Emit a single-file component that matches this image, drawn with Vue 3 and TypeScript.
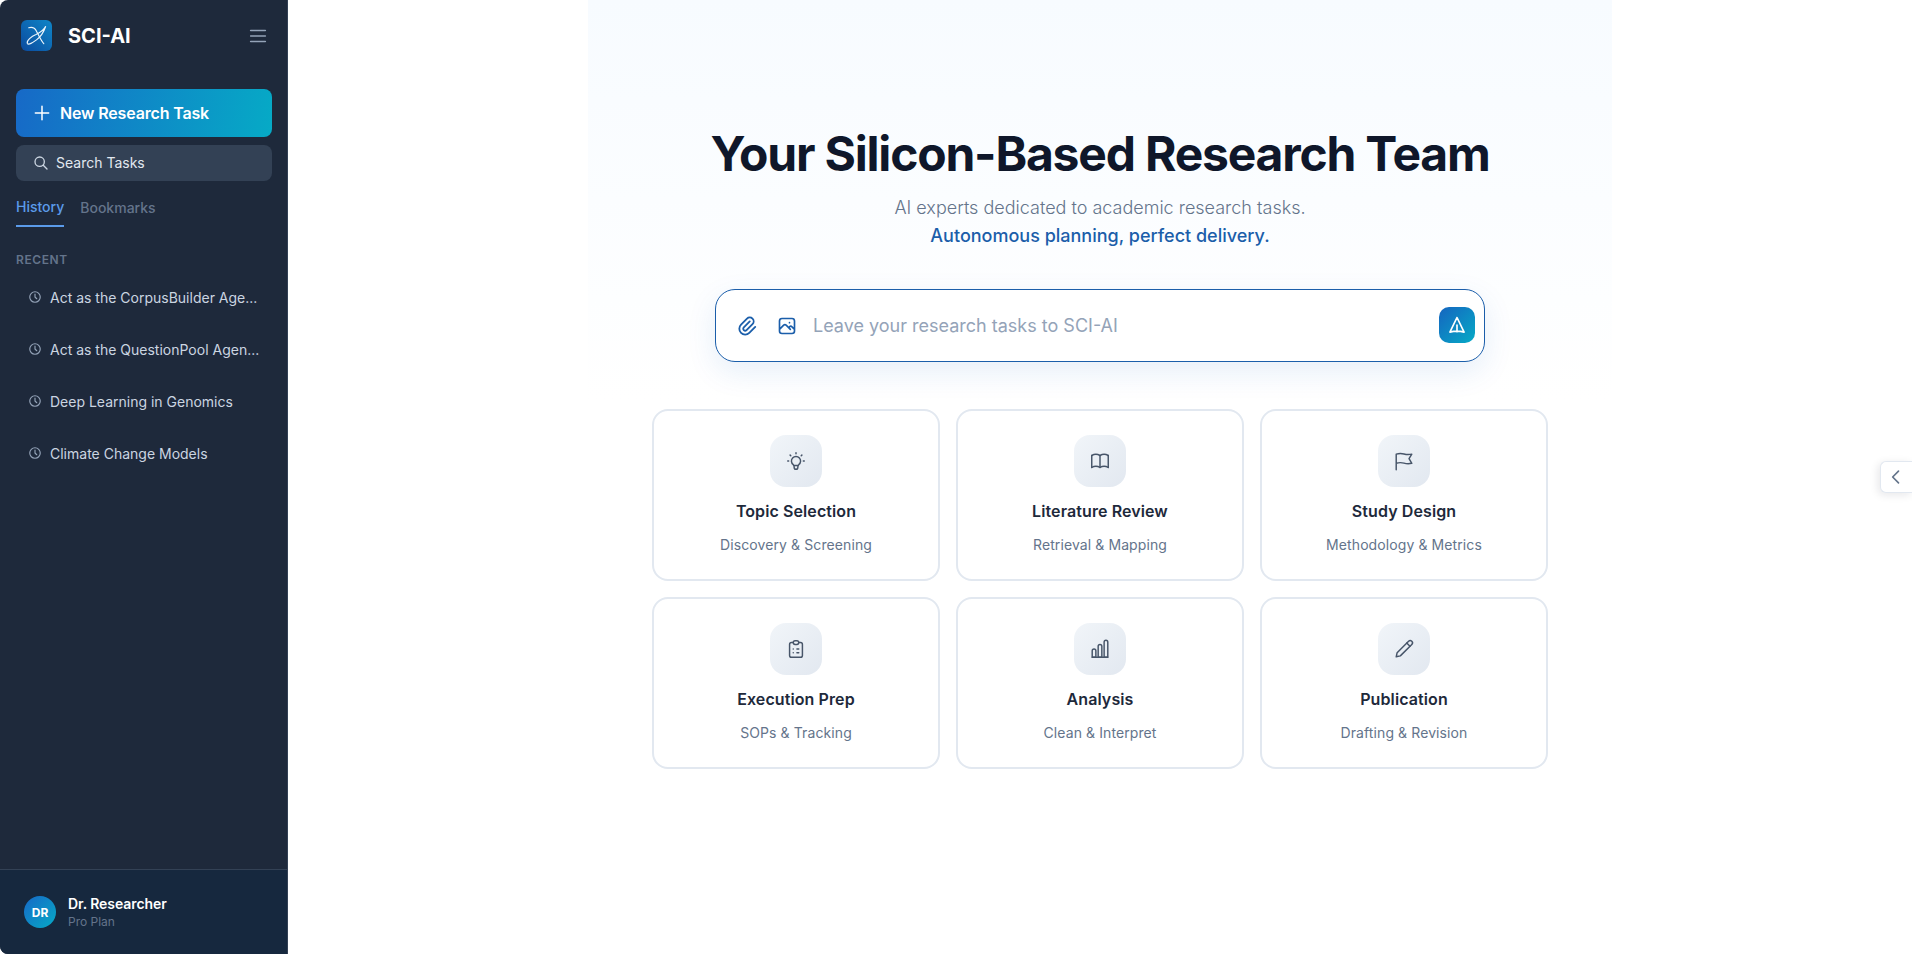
<script setup lang="ts">
const recent: string[] = [
  'Act as the CorpusBuilder Age...',
  'Act as the QuestionPool Agen...',
  'Deep Learning in Genomics',
  'Climate Change Models',
];

const stages = [
  {
    title: 'Topic Selection',
    sub: 'Discovery & Screening',
    paths: [
      'M3 12h1m8 -9v1m8 8h1m-15.4 -6.4l.7 .7m12.1 -.7l-.7 .7',
      'M9 16a5 5 0 1 1 6 0a3.5 3.5 0 0 0 -1 3a2 2 0 0 1 -4 0a3.5 3.5 0 0 0 -1 -3',
      'M9.7 17l4.6 0',
    ],
  },
  {
    title: 'Literature Review',
    sub: 'Retrieval & Mapping',
    paths: [
      'M3 19a9 9 0 0 1 9 0a9 9 0 0 1 9 0',
      'M3 6a9 9 0 0 1 9 0a9 9 0 0 1 9 0',
      'M3 6l0 13',
      'M12 6l0 13',
      'M21 6l0 13',
    ],
  },
  {
    title: 'Study Design',
    sub: 'Methodology & Metrics',
    paths: ['M3.500 21.500V4.500c3-1 5.500-1 8.500-.2s5.500 .8 8.500 .2l-3 5 3 5c-3 .6-5.500 .6-8.500-.2s-5.500-.8-8.500 .2'],
  },
  {
    title: 'Execution Prep',
    sub: 'SOPs & Tracking',
    paths: [
      'M9 5h-2a2 2 0 0 0 -2 2v12a2 2 0 0 0 2 2h10a2 2 0 0 0 2 -2v-12a2 2 0 0 0 -2 -2h-2',
      'M9 5a2 2 0 0 1 2 -2h2a2 2 0 0 1 2 2v0a2 2 0 0 1 -2 2h-2a2 2 0 0 1 -2 -2z',
      'M9 12l.01 0',
      'M13 12l2 0',
      'M9 16l.01 0',
      'M13 16l2 0',
    ],
  },
  {
    title: 'Analysis',
    sub: 'Clean & Interpret',
    paths: [
      'M3.500 14a2 2 0 0 1 4 0v7h-4z',
      'M10 9a2 2 0 0 1 4 0v12h-4z',
      'M16.500 4.500a2 2 0 0 1 4 0v16.500h-4z',
      'M3.500 21h17',
    ],
  },
  {
    title: 'Publication',
    sub: 'Drafting & Revision',
    paths: [
      'M3.500 20.500l1-4.500L17 3.500a2.100 2.100 0 0 1 3.500 3.500L8 19.500z',
      'M15 5.500l3.500 3.500',
    ],
  },
];
</script>

<template>
  <div class="app">
    <aside class="sidebar">
      <div class="brand">
        <span class="logo">
          <svg viewBox="0 0 32 32" width="31" height="31" fill="none" stroke="#eaf4fb" stroke-width="1.200" stroke-linecap="round">
            <path d="M8 8c3.500-1 6-.5 8 3.500s4.500 9.500 7.500 13" />
            <path d="M25.500 6.500c-1.500 4.500-4 10-9.500 14-3.500 2.500-8.500 6-9.500 3.500-.8-2.500 4-7 9-9 4-1.800 8-4.500 10-8.500z" />
          </svg>
        </span>
        <span class="brand-name">SCI-AI</span>
        <svg class="menu" viewBox="0 0 24 24" width="22" height="22" fill="none" stroke="#94a3b8" stroke-width="1.800" stroke-linecap="round">
          <path d="M4 6h16M4 12h16M4 18h16" />
        </svg>
      </div>

      <button class="new-task">
        <svg viewBox="0 0 24 24" width="20" height="20" fill="none" stroke="#fff" stroke-width="1.800" stroke-linecap="round">
          <path d="M12 4v16M4 12h16" />
        </svg>
        New Research Task
      </button>

      <div class="search">
        <svg viewBox="0 0 24 24" width="16" height="16" fill="none" stroke="#cbd5e1" stroke-width="2" stroke-linecap="round">
          <path d="M10 3a7 7 0 1 0 0 14a7 7 0 1 0 0-14zM21 21l-6-6" />
        </svg>
        <span>Search Tasks</span>
      </div>

      <div class="tabs">
        <span class="tab active">History</span>
        <span class="tab">Bookmarks</span>
      </div>

      <div class="section-label">RECENT</div>
      <ul class="history">
        <li v-for="item in recent" :key="item">
          <svg viewBox="0 0 24 24" width="14" height="14" fill="none" stroke="#94a3b8" stroke-width="2" stroke-linecap="round" stroke-linejoin="round">
            <path d="M3 12a9 9 0 1 0 18 0a9 9 0 0 0-18 0M12 7v5l3 3" />
          </svg>
          <span>{{ item }}</span>
        </li>
      </ul>

      <div class="user">
        <span class="avatar">DR</span>
        <div>
          <div class="user-name">Dr. Researcher</div>
          <div class="user-plan">Pro Plan</div>
        </div>
      </div>
    </aside>

    <main class="main">
      <div class="hero">
        <h1>Your Silicon-Based Research Team</h1>
        <p class="lead">AI experts dedicated to academic research tasks.</p>
        <p class="lead accent">Autonomous planning, perfect delivery.</p>

        <div class="prompt">
          <svg class="tool" viewBox="0 0 24 24" width="22" height="22" fill="none" stroke="#1b5eaa" stroke-width="2" stroke-linecap="round" stroke-linejoin="round">
            <path d="M15 7l-6.500 6.500a1.500 1.500 0 0 0 3 3l6.500-6.500a3 3 0 0 0-6-6l-6.500 6.500a4.500 4.500 0 0 0 9 9l6.500-6.500" />
          </svg>
          <svg class="tool tool-image" viewBox="0 0 24 24" width="20" height="20" fill="none" stroke="#1b5eaa" stroke-width="2" stroke-linecap="round" stroke-linejoin="round">
            <path d="M15 8h.01M3 6a3 3 0 0 1 3-3h12a3 3 0 0 1 3 3v12a3 3 0 0 1-3 3h-12a3 3 0 0 1-3-3v-12zM3 16l5-5c.928-.893 2.072-.893 3 0l5 5M14 14l1-1c.928-.893 2.072-.893 3 0l3 3" />
          </svg>
          <span class="placeholder">Leave your research tasks to SCI-AI</span>
          <button class="send">
            <svg viewBox="0 0 24 24" width="20" height="20" fill="none" stroke="#fff" stroke-width="2" stroke-linejoin="round" stroke-linecap="round">
              <path d="M12 3L3.500 20.500c5.500-1.500 11.500-1.500 17 0zM12 12v8" />
            </svg>
          </button>
        </div>

        <div class="grid">
          <div v-for="stage in stages" :key="stage.title" class="card">
            <span class="tile">
              <svg viewBox="0 0 24 24" width="22" height="22" fill="none" stroke="#475569" stroke-width="1.600" stroke-linecap="round" stroke-linejoin="round">
                <path v-for="d in stage.paths" :key="d" :d="d" />
              </svg>
            </span>
            <div class="card-title">{{ stage.title }}</div>
            <div class="card-sub">{{ stage.sub }}</div>
          </div>
        </div>
      </div>
    </main>

    <button class="drawer-toggle">
      <svg viewBox="0 0 24 24" width="20" height="20" fill="none" stroke="#64748b" stroke-width="2" stroke-linecap="round" stroke-linejoin="round">
        <path d="M15 5l-7 7 7 7" />
      </svg>
    </button>
  </div>
</template>

<style>
html,
body {
  margin: 0;
  height: 100%;
  overflow: hidden;
  background: #fff;
}
</style>

<style scoped>
.app {
  display: flex;
  position: relative;
  height: 100vh;
  font-family: Inter, "Liberation Sans", sans-serif;
  color: #0f172a;
}

.sidebar {
  display: flex;
  flex-direction: column;
  flex: 0 0 288px;
  box-sizing: border-box;
  background: #1e293b;
  border-right: 1px solid #334155;
  border-radius: 8px 0 0 8px;
  overflow: hidden;
}

.brand {
  display: flex;
  align-items: center;
  height: 31px;
  margin: 20px 18px 0 21px;
}

.logo {
  display: flex;
  width: 31px;
  height: 31px;
  border-radius: 6px;
  background: linear-gradient(45deg, #0b4a9e, #0f86c8);
}

.brand-name {
  margin-left: 16px;
  font-size: 20px;
  font-weight: 700;
  color: #fff;
  flex: 1;
}

.new-task {
  display: flex;
  align-items: center;
  gap: 8px;
  height: 48px;
  margin: 38px 15px 0 16px;
  padding: 0 16px;
  border: 0;
  border-radius: 8px;
  background: linear-gradient(100deg, #1769c7, #06aac6);
  color: #fff;
  font: 600 16px Inter, sans-serif;
  letter-spacing: -0.01em;
}

.search {
  display: flex;
  align-items: center;
  gap: 7px;
  box-sizing: border-box;
  height: 36px;
  margin: 8px 15px 0 16px;
  padding: 0 16px 1px 17px;
  border-radius: 8px;
  background: #334155;
  color: #e2e8f0;
  font-size: 14px;
}

.tabs {
  display: flex;
  gap: 16px;
  margin: 15px 15px 0 16px;
}

.tab {
  margin-top: 1px;
  font-size: 14px;
  line-height: 21px;
  font-weight: 500;
  color: #64748b;
}

.tab.active {
  margin-top: 0;
  padding-bottom: 8px;
  color: #5b9bea;
  border-bottom: 2px solid #5b9bea;
}

.section-label {
  margin: 25px 16px 0;
  font-size: 12px;
  line-height: 16px;
  font-weight: 600;
  letter-spacing: 0.05em;
  color: #64748b;
}

.history {
  flex: 1;
  margin: 3px 15px 0 16px;
  padding: 0;
  list-style: none;
}

.history li {
  display: flex;
  align-items: center;
  gap: 8px;
  height: 52px;
  padding: 0 12px;
  font-size: 14px;
  color: #cbd5e1;
  white-space: nowrap;
}

.history svg {
  flex-shrink: 0;
}

.user {
  display: flex;
  align-items: center;
  gap: 12px;
  height: 84px;
  padding: 0 24px;
  border-top: 1px solid #334155;
  background: #16283e;
}

.avatar {
  display: flex;
  align-items: center;
  justify-content: center;
  width: 32px;
  height: 32px;
  border-radius: 50%;
  background: linear-gradient(135deg, #1769c7, #06aac6);
  color: #fff;
  font-size: 12px;
  font-weight: 700;
}

.user-name {
  font-size: 14px;
  line-height: 20px;
  font-weight: 600;
  letter-spacing: -0.005em;
  color: #fff;
}

.user-plan {
  font-size: 12px;
  line-height: 16px;
  color: #64748b;
}

.main {
  flex: 1;
  display: flex;
  justify-content: center;
  min-width: 0;
}

.hero {
  display: flex;
  flex-direction: column;
  align-items: center;
  box-sizing: border-box;
  width: 1024px;
  padding-top: 130px;
  background: linear-gradient(180deg, #f7fbff 0, #fff 400px);
}

h1 {
  margin: 0 0 16px;
  font-size: 48px;
  line-height: 48px;
  font-weight: 700;
  letter-spacing: -0.025em;
  color: #0f172a;
}

.lead {
  margin: 0;
  font-size: 18px;
  line-height: 28px;
  font-weight: 300;
  color: #64748b;
}

.lead.accent {
  font-weight: 500;
  color: #1b5eaa;
}

.prompt {
  display: flex;
  align-items: center;
  box-sizing: border-box;
  width: 770px;
  height: 73px;
  margin-top: 39px;
  padding: 0 9px 0 20px;
  border: 1px solid #1b5eaa;
  border-radius: 20px;
  background: #fff;
  box-shadow: 0 10px 30px rgba(21, 101, 192, 0.1);
}

.tool {
  margin-right: 19px;
}

.tool-image {
  margin-right: 16px;
}

.placeholder {
  flex: 1;
  font-size: 18px;
  color: #94a3b8;
}

.send {
  display: flex;
  align-items: center;
  justify-content: center;
  width: 36px;
  height: 36px;
  margin-bottom: 1px;
  padding: 0;
  border: 0;
  border-radius: 10px;
  background: linear-gradient(135deg, #1565c0, #06aac6);
}

.grid {
  display: grid;
  grid-template-columns: repeat(3, 1fr);
  gap: 16px;
  width: 896px;
  margin-top: 47px;
}

.card {
  display: flex;
  flex-direction: column;
  align-items: center;
  box-sizing: border-box;
  height: 172px;
  padding-top: 24px;
  border: 2px solid #e2e8f0;
  border-radius: 16px;
  background: #fff;
  letter-spacing: 0.006em;
}

.tile {
  display: flex;
  align-items: center;
  justify-content: center;
  width: 52px;
  height: 52px;
  border-radius: 16px;
  background: linear-gradient(135deg, #f1f5f9, #e2e8f0);
}

.card-title {
  margin-top: 12px;
  font-size: 16px;
  line-height: 24px;
  font-weight: 600;
  color: #1e293b;
}

.card-sub {
  margin-top: 12px;
  font-size: 14px;
  line-height: 20px;
  color: #64748b;
}

.drawer-toggle {
  position: absolute;
  top: 461px;
  right: 0;
  display: flex;
  align-items: center;
  justify-content: center;
  box-sizing: border-box;
  width: 32px;
  height: 32px;
  padding: 0 2px 0 0;
  border: 1px solid #e2e8f0;
  border-right: 0;
  border-radius: 6px 0 0 6px;
  background: #fff;
  box-shadow: -2px 2px 8px rgba(15, 23, 42, 0.1);
}
</style>
